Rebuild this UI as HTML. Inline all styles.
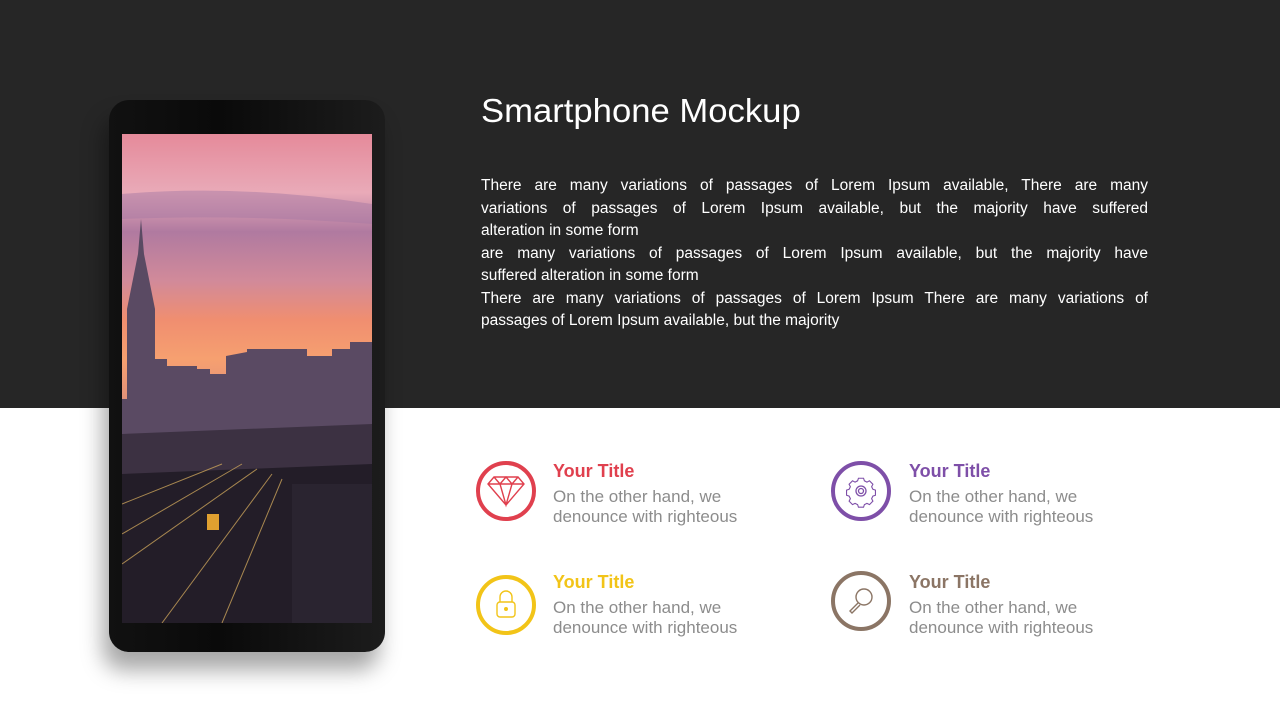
<!DOCTYPE html>
<html><head><meta charset="utf-8"><style>
*{margin:0;padding:0;box-sizing:border-box}
body{width:1280px;height:720px;overflow:hidden;background:#fff;font-family:"Liberation Sans",sans-serif;position:relative}
.band{position:absolute;left:0;top:0;width:1280px;height:408px;background:#262626}
.phone{position:absolute;left:109px;top:100px;width:276px;height:552px;border-radius:20px;background:linear-gradient(90deg,#111 0%,#0a0a0a 40%,#1c1c1c 100%);box-shadow:-6px 18px 22px rgba(0,0,0,.35)}
.screen{position:absolute;left:122px;top:134px;width:250px;height:489px;overflow:hidden}
h1{position:absolute;left:481px;top:92px;color:#fff;font-weight:normal;font-size:33px;transform:scaleX(1.05);transform-origin:left}
.p{position:absolute;left:481px;top:175px;width:667px;color:#fff;font-size:15.5px;line-height:22.5px}
.p span{display:block;white-space:nowrap}
.p span.j{text-align:justify;text-align-last:justify}
.it{position:absolute}
.it svg{position:absolute;left:0;top:0}
.it b{position:absolute;left:78px;top:1px;font-size:18px;white-space:nowrap}
.it p{position:absolute;left:78px;top:27px;font-size:17px;line-height:20px;color:#8c8c8c;white-space:nowrap}
</style></head><body>
<div class="band"></div>
<div class="phone"></div>
<div class="screen">
<svg width="250" height="489" viewBox="0 0 250 489">
<defs><linearGradient id="sky" x1="0" y1="0" x2="0" y2="1">
<stop offset="0" stop-color="#e58a9a"/><stop offset=".12" stop-color="#e9aab8"/><stop offset=".2" stop-color="#b07aa0"/><stop offset=".3" stop-color="#d18a9a"/><stop offset=".38" stop-color="#f08e70"/><stop offset=".46" stop-color="#f6a070"/><stop offset=".55" stop-color="#e0907a"/></linearGradient></defs>
<rect width="250" height="489" fill="url(#sky)"/>
<path d="M0 60 Q120 50 250 70 L250 90 Q120 80 0 85Z" fill="#a77aa4" opacity=".5"/>
<path d="M0 265 L5 265 L5 175 L10 150 L16 120 L19 85 L22 120 L28 150 L33 175 L33 225 L45 225 L45 232 L55 232 L55 232 L75 232 L75 235 L88 235 L88 240 L104 240 L104 222 L125 218 L125 215 L185 215 L185 222 L210 222 L210 215 L228 215 L228 208 L250 208 L250 489 L0 489Z" fill="#5a4a63"/>
<path d="M0 300 L250 290 L250 489 L0 489Z" fill="#3c3142"/>
<path d="M0 340 L250 330 L250 489 L0 489Z" fill="#231d28"/>
<g stroke="#c9a25a" stroke-width="1" fill="none" opacity=".8">
<path d="M0 400 L120 330"/><path d="M0 430 L135 335"/><path d="M40 489 L150 340"/><path d="M100 489 L160 345"/><path d="M0 370 L100 330"/></g>
<rect x="85" y="380" width="12" height="16" fill="#e0a030"/>
<rect x="170" y="350" width="80" height="139" fill="#2a2430"/>
</svg></div>
<h1>Smartphone Mockup</h1>
<div class="p">
<span class="j">There are many variations of passages of Lorem Ipsum available, There are many</span>
<span class="j">variations of passages of Lorem Ipsum available, but the majority have suffered</span>
<span>alteration in some form</span>
<span class="j">are many variations of passages of Lorem Ipsum available, but the majority have</span>
<span>suffered alteration in some form</span>
<span class="j">There are many variations of passages of Lorem Ipsum There are many variations of</span>
<span>passages of Lorem Ipsum available, but the majority</span>
</div>

<div class="it" style="left:475px;top:460px"><svg width="64" height="64"><circle cx="31" cy="31" r="28" fill="none" stroke="#e0404e" stroke-width="4"/><g fill="none" stroke="#e0404e" stroke-width="1.4"><path d="M13 24 L19 17 H43 L49 24 L31 45Z M13 24 H49 M19 17 L25 24 L31 17 L37 24 L43 17 M25 24 L31 45 L37 24"/></g></svg><b style="color:#e0404e">Your Title</b><p>On the other hand, we<br>denounce with righteous</p></div>
<div class="it" style="left:831px;top:460px"><svg width="64" height="64"><circle cx="30" cy="31" r="28" fill="none" stroke="#7e4fa8" stroke-width="4"/><g fill="none" stroke="#7e4fa8" stroke-width="1.3"><circle cx="30" cy="31" r="5"/><circle cx="30" cy="31" r="2.5"/><path d="M27 19h6l1 3 3 1.5 3-1.5 4 4-1.5 3 1.5 3 3 1v6l-3 1-1.5 3 1.5 3-4 4-3-1.5-3 1.5-1 3h-6l-1-3-3-1.5-3 1.5-4-4 1.5-3-1.5-3-3-1v-6l3-1 1.5-3-1.5-3 4-4 3 1.5 3-1.5z" transform="translate(30 31) scale(.85) translate(-30 -31) translate(0 -3)"/></g></svg><b style="color:#7e4fa8">Your Title</b><p>On the other hand, we<br>denounce with righteous</p></div>
<div class="it" style="left:475px;top:571px"><svg width="64" height="64"><circle cx="31" cy="34" r="28" fill="none" stroke="#f2c418" stroke-width="4"/><g fill="none" stroke="#f2c418" stroke-width="1.4"><path d="M25 31 V26 a6 6 0 0 1 12 0 V31"/><rect x="22" y="31" width="18" height="15" rx="3"/><circle cx="31" cy="38" r="1.3" fill="#f2c418"/></g></svg><b style="color:#f2c418">Your Title</b><p>On the other hand, we<br>denounce with righteous</p></div>
<div class="it" style="left:831px;top:571px"><svg width="64" height="64"><circle cx="30" cy="30" r="28" fill="none" stroke="#8b7565" stroke-width="4"/><g fill="none" stroke="#8b7565" stroke-width="1.4"><circle cx="33" cy="26" r="8"/><path d="M27 32 L19 40 L21 42 L29 34"/></g></svg><b style="color:#8b7565">Your Title</b><p>On the other hand, we<br>denounce with righteous</p></div>
</body></html>
